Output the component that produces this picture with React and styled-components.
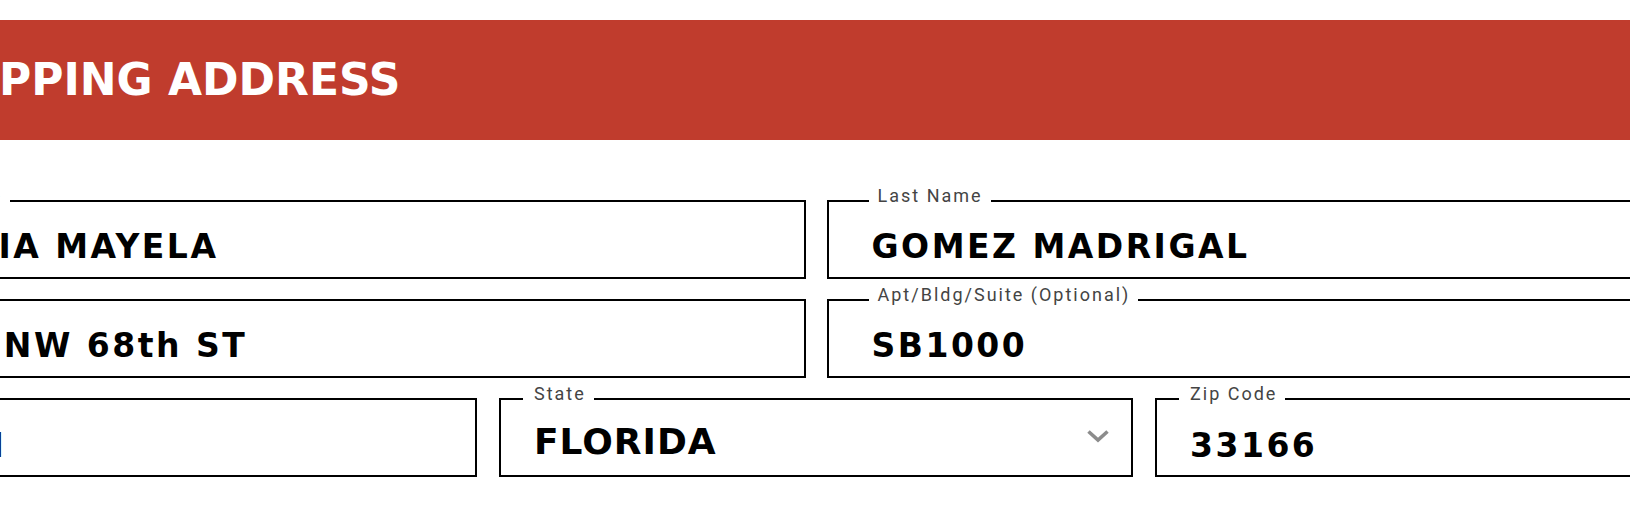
import React from "react";
import styled, { createGlobalStyle } from "styled-components";

const GlobalStyle = createGlobalStyle`
  html, body {
    margin: 0;
    padding: 0;
    overflow: hidden;
    background: #fff;
  }
  body {
    font-family: "DejaVu Sans", sans-serif;
  }
`;

// the form is wider than the window, it starts off the left edge
const Page = styled.div`
  width: 1946px;
  margin-left: -157px;
  padding-top: 20px;
`;

const Banner = styled.header`
  height: 120px;
  background: #c03c2d;
  display: flex;
  align-items: center;
  padding-left: 71px;
`;

const Title = styled.h1`
  margin: 0;
  font: 700 44px/1 "DejaVu Sans", sans-serif;
  color: #fff;
`;

const Form = styled.form`
  margin-top: 60px;
  display: flex;
  flex-direction: column;
  gap: 20px;
`;

const Row = styled.div`
  display: grid;
  grid-template-columns: repeat(${(p) => p.$cols}, 1fr);
  column-gap: ${(p) => (p.$cols === 3 ? 22 : 21)}px;
`;

const Field = styled.div`
  position: relative;
  box-sizing: border-box;
  height: 79px;
  border: 2px solid #000;
  display: flex;
  align-items: center;
  padding: 0 21px 0 ${(p) => (p.$compact ? 33 : 43)}px;
`;

const Label = styled.label`
  position: absolute;
  top: -15px;
  left: ${(p) => (p.$compact ? 22 : 40)}px;
  padding: 0 8px 0 ${(p) => (p.$compact ? 11 : 9)}px;
  background: #fff;
  font: 400 18px/18px Roboto, sans-serif;
  letter-spacing: 2px;
  color: #444;
  white-space: nowrap;
`;

const Input = styled.input`
  flex: 1;
  min-width: 0;
  height: 33px;
  margin: ${(p) => p.$shift}px 0 0;
  padding: 0;
  border: 0;
  outline: 0;
  background: transparent;
  font: 700 33px/33px "DejaVu Sans", sans-serif;
  letter-spacing: 2.5px;
  color: #000;
`;

const Select = styled.select`
  flex: 1;
  min-width: 0;
  height: 37px;
  margin: 8px 0 0;
  padding: 0;
  border: 0;
  outline: 0;
  background: transparent;
  appearance: none;
  -webkit-appearance: none;
  font: 700 36px/37px "DejaVu Sans", sans-serif;
  letter-spacing: 1px;
  color: #000;
`;

const Chevron = styled.svg`
  flex: none;
  width: 24px;
  height: 14px;
  margin-bottom: 4px;
`;

function TextField({ label, value, compact, shift }) {
  return (
    <Field $compact={compact}>
      <Label $compact={compact}>{label}</Label>
      <Input readOnly value={value} $shift={shift} />
    </Field>
  );
}

export default function App() {
  return (
    <>
      <GlobalStyle />
      <Page>
        <Banner>
          <Title>SHIPPING ADDRESS</Title>
        </Banner>
        <Form>
          <Row $cols={2}>
            <TextField label="First Name" value="GLORIA MAYELA" shift={14} />
            <TextField label="Last Name" value="GOMEZ MADRIGAL" shift={14} />
          </Row>
          <Row $cols={2}>
            <TextField label="Address" value="4000 NW 68th ST" shift={14} />
            <TextField label="Apt/Bldg/Suite (Optional)" value="SB1000" shift={14} />
          </Row>
          <Row $cols={3}>
            <TextField label="City" value="MIAMI" compact shift={16} />
            <Field $compact>
              <Label $compact>State</Label>
              <Select defaultValue="FL">
                <option value="FL">FLORIDA</option>
                <option value="GA">GEORGIA</option>
              </Select>
              <Chevron viewBox="0 0 24 14" fill="none">
                <path d="M2.5 2.5 L12 11 L21.5 2.5" stroke="#8c8c8c" strokeWidth="3.6" />
              </Chevron>
            </Field>
            <TextField label="Zip Code" value="33166" compact shift={16} />
          </Row>
        </Form>
      </Page>
    </>
  );
}
